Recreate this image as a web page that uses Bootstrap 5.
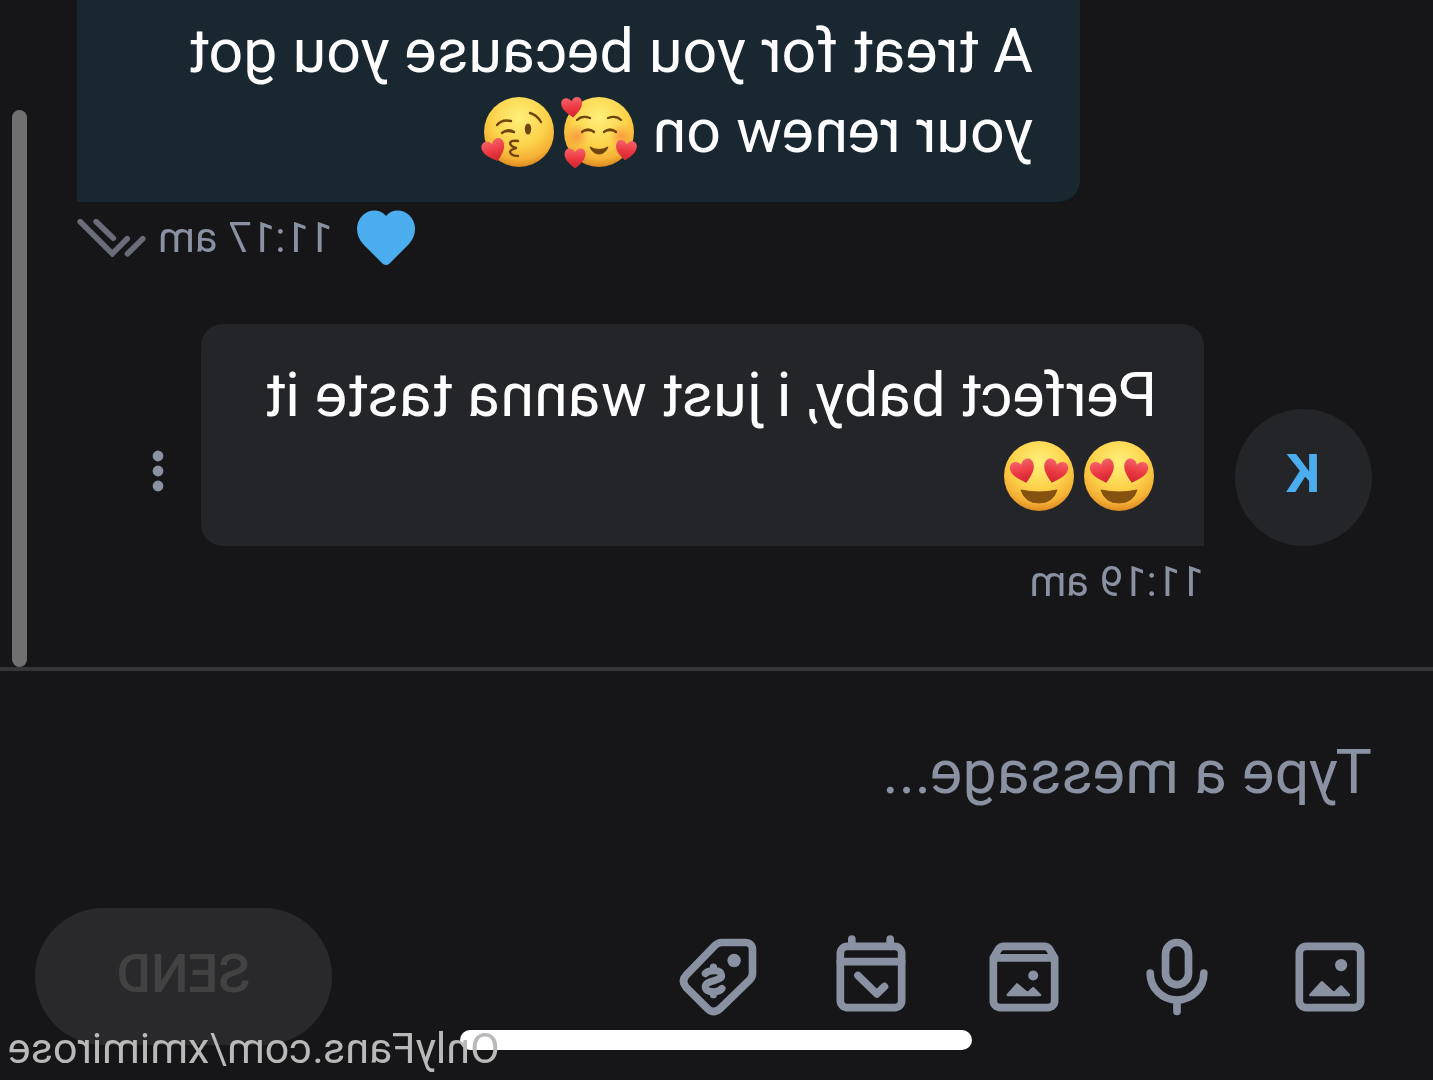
<!DOCTYPE html>
<html lang="en">
<head>
<meta charset="utf-8">
<meta name="viewport" content="width=device-width, initial-scale=1">
<title>Messages</title>
<link href="https://cdn.jsdelivr.net/npm/bootstrap@5.3.0/dist/css/bootstrap.min.css" rel="stylesheet">
<style>
  body { background: #161618; color: #fdfdfe; font-family: Roboto, "Liberation Sans", sans-serif; }
  /* The whole view is shown flipped, like a selfie-camera recording */
  .flipped { transform: scaleX(-1); }
  .muted-ink { color: #8a91a2; }
  .thread { padding-bottom: 55px; }
  .message + .message { margin-top: 56px; }
  .sent { padding-right: 77px; }
  .received { padding-left: 61px; }
  .bubble { width: 70vw; padding: 31px 47px; font-size: 61px; line-height: 80px; border-radius: 22px; }
  .bubble-sent { background: #182730; border-bottom-right-radius: 0; }
  .bubble-received { background: #242529; border-bottom-left-radius: 0; }
  .emoji { width: 80px; height: 80px; vertical-align: top; overflow: visible; }
  .meta { margin-top: 6px; font-size: 42px; line-height: 60px; }
  .meta-received { margin-left: 168px; }
  .avatar { width: 137px; height: 137px; margin-right: 31px; padding-bottom: 6px; background: #242529; color: #4bacee; font-size: 53px; }
  .more-btn { margin: 0 0 48px 37px; width: 12px; }
  .like-btn { margin-right: 24px; }
  .checks { margin-left: 12px; }
  .scroll-thumb { top: 110px; right: 12px; bottom: 0; width: 15px; background: #707070; }
  .composer { border-top: 4px solid #363638; padding-top: 61px; padding-bottom: 35px; }
  .composer-input { padding: 0 61px; font-size: 61px; line-height: 80px; height: 80px; margin-bottom: 96px; background: transparent; color: #fdfdfe; }
  .composer-input:focus { background: transparent; color: #fdfdfe; box-shadow: none; }
  .composer-input::placeholder { color: #8a91a2; opacity: 1; }
  .toolbar { padding-left: 26px; padding-right: 35px; }
  .tool { width: 153px; height: 137px; color: #8a91a2; }
  .tool svg { width: 92px; height: 92px; }
  .send-btn, .send-btn:disabled { width: 297px; height: 137px; padding-bottom: 10px; background: #29292c; color: #424243; border: 0; opacity: 1; font-size: 53px; }
  .home-bar { width: 512px; height: 20px; bottom: 30px; background: #fff; }
  .watermark { right: 8px; bottom: 4px; font-size: 43px; line-height: 56px; color: #b9b9b9; }
</style>
<script src="https://cdn.jsdelivr.net/npm/bootstrap@5.3.0/dist/js/bootstrap.bundle.min.js"></script>
</head>
<body>
<svg width="0" height="0" class="position-absolute" aria-hidden="true">
  <defs>
    <radialGradient id="face" cx=".5" cy=".3" r=".72">
      <stop offset="0" stop-color="#fff07a"/><stop offset=".55" stop-color="#fcd24a"/><stop offset=".82" stop-color="#f5b135"/><stop offset="1" stop-color="#d9821f"/>
    </radialGradient>
    <radialGradient id="blush"><stop offset="0" stop-color="#f9823c" stop-opacity=".65"/><stop offset="1" stop-color="#f9823c" stop-opacity="0"/></radialGradient>
    <linearGradient id="love" x1="0" y1="0" x2="0" y2="1"><stop offset="0" stop-color="#f5626a"/><stop offset=".5" stop-color="#ec3a42"/><stop offset="1" stop-color="#cf2430"/></linearGradient>
    <path id="heart" d="M0 11C-5 7-11 2-11-4C-11-11-3-12 0-6C3-12 11-11 11-4C11 2 5 7 0 11Z" fill="url(#love)"/>
  </defs>
</svg>

<div class="flipped d-flex flex-column vh-100 overflow-hidden position-relative">
  <main class="thread position-relative flex-grow-1 d-flex flex-column justify-content-end overflow-hidden">
    <article class="message sent d-flex flex-column align-items-end">
      <div class="bubble bubble-sent">A treat for you because you got your renew on <svg class="emoji" viewBox="0 0 80 80" role="img" aria-label="smiling face with hearts"><g transform="translate(38 41)">
        <circle r="35" fill="url(#face)"/>
        <circle cx="-22" cy="4" r="12" fill="url(#blush)"/><circle cx="22" cy="4" r="12" fill="url(#blush)"/>
        <g fill="none" stroke="#6f4410" stroke-width="2.4" stroke-linecap="round">
          <path d="M-22-12Q-17-17-9-14M22-12Q17-17 9-14"/>
          <path d="M-17 0Q-11-5-5 0M-16-1Q-11-3-6-1M17 0Q11-5 5 0M16-1Q11-3 6-1"/>
        </g>
        <path d="M-9 15Q0 20 9 15Q6 22 0 22T-9 15Z" fill="#6f4410" stroke="#6f4410" stroke-linejoin="round"/>
        <use href="#heart" transform="translate(27 -25) rotate(6) scale(.95)"/><use href="#heart" transform="translate(24 26) scale(.95)"/><use href="#heart" transform="translate(-27 18) rotate(-6) scale(.95)"/>
      </g></svg><svg class="emoji" viewBox="0 0 80 80" role="img" aria-label="face blowing a kiss"><g transform="translate(38 41)">
        <circle r="35" fill="url(#face)"/>
        <g fill="none" stroke="#6f4410" stroke-width="2.4" stroke-linecap="round" stroke-linejoin="round">
          <path d="M22-7Q17-13 8-11M-11-19Q-18-17-22-10"/>
          <path d="M17 1Q11-4 5 0M16 0Q11-2 6 0"/>
          <path d="M1 9Q8 8 9 11Q9 14 3 16Q9 18 9 20Q8 24 1 24"/>
        </g>
        <ellipse cx="-9" cy="-3" rx="3.2" ry="5.6" fill="#6f4410"/>
        <use href="#heart" transform="translate(25 18) rotate(18) scale(1.05)"/>
      </g></svg></div>
      <div class="meta d-flex align-items-center muted-ink">
        <button type="button" class="like-btn btn p-0 border-0 d-flex" aria-label="Liked">
          <svg width="58" height="56" viewBox="0 0 58 56" fill="#4bacee"><path d="M26 54L6 34C-2 25-2 12 6 5C13-1 23-1 29 6C35-1 45-1 52 5C60 12 60 25 52 34L32 54Q29 56 26 54Z"/></svg>
        </button>
        <time datetime="11:17">11:17 am</time>
        <svg class="checks" width="69" height="38" viewBox="0 0 207 115" fill="none" stroke="#6a6d77" stroke-width="17" stroke-linecap="round" role="img" aria-label="Read"><path d="M198 8L101 105L56 60M150 8L98 58M55 105L9 60"/></svg>
      </div>
    </article>

    <article class="message received">
      <div class="d-flex align-items-end">
        <div class="avatar rounded-circle flex-shrink-0 d-flex align-items-center justify-content-center fw-bold">K</div>
        <div class="bubble bubble-received">Perfect baby, i just wanna taste it <svg class="emoji" viewBox="0 0 80 80" role="img" aria-label="heart eyes"><g id="heart-eyes" transform="translate(38 41)">
          <circle r="35" fill="url(#face)"/>
          <use href="#heart" transform="translate(-16 -5) rotate(-16) scale(1.1)"/><use href="#heart" transform="translate(16 -5) rotate(16) scale(1.1)"/>
          <path d="M-18 14Q0 18 18 14Q14 27 0 27T-18 14Z" fill="#85530f" stroke="#85530f" stroke-linejoin="round"/>
        </g></svg><svg class="emoji" viewBox="0 0 80 80" role="img" aria-label="heart eyes"><use href="#heart-eyes"/></svg></div>
        <button type="button" class="more-btn btn p-0 border-0 d-flex flex-shrink-0" aria-label="More options">
          <svg width="12" height="48" viewBox="0 0 12 48" fill="#8a91a2"><circle cx="6" cy="6" r="5.4"/><circle cx="6" cy="21" r="5.4"/><circle cx="6" cy="36" r="5.4"/></svg>
        </button>
      </div>
      <div class="meta meta-received muted-ink"><time datetime="11:19">11:19 am</time></div>
    </article>
    <div class="scroll-thumb position-absolute rounded-pill"></div>
  </main>

  <form class="composer flex-shrink-0">
    <input type="text" class="composer-input form-control border-0 rounded-0" placeholder="Type a message..." aria-label="Message">
    <div class="toolbar d-flex align-items-center">
      <button type="button" class="tool btn p-0 border-0" aria-label="Add image">
        <svg viewBox="0 0 24 24" fill="none" stroke="currentColor" stroke-width="2"><rect x="4" y="4" width="16" height="16" rx="1.8"/><circle cx="9.1" cy="8.9" r="1.6" fill="currentColor" stroke="none"/><path d="M17.1 16.7H7.1L9.1 14.5L11 16.3L14.1 13.4Z" fill="currentColor" stroke-width=".7" stroke-linejoin="round"/></svg>
      </button>
      <button type="button" class="tool btn p-0 border-0" aria-label="Record voice">
        <svg viewBox="0 0 24 24" fill="none" stroke="currentColor" stroke-width="2" stroke-linecap="round"><rect x="9" y="3" width="6" height="11" rx="3"/><path d="M5 11a7 7 0 0 0 14 0M12 18v3"/></svg>
      </button>
      <button type="button" class="tool btn p-0 border-0" aria-label="Media vault">
        <svg viewBox="0 0 24 24" fill="none" stroke="currentColor" stroke-width="2" stroke-linejoin="round"><path d="M4 7V18.2A1.8 1.8 0 0 0 5.8 20H18.2A1.8 1.8 0 0 0 20 18.2V7L18.7 4.8Q18.2 4 17.3 4H6.7Q5.8 4 5.3 4.8ZH20"/><circle cx="9.6" cy="11.6" r="1.3" fill="currentColor" stroke="none"/><path d="M16.3 16.7H7.8L9.6 14.9L11.1 16.2L13.8 13.9Z" fill="currentColor" stroke-width=".6"/></svg>
      </button>
      <button type="button" class="tool btn p-0 border-0" aria-label="Schedule">
        <svg viewBox="0 0 24 24" fill="none" stroke="currentColor" stroke-width="2" stroke-linecap="round" stroke-linejoin="round"><rect x="4" y="4" width="16" height="16" rx="1.8"/><path d="M4 8H20M7 2.1V4M17 2.1V4M15.4 11.6L10.5 16.4L8.5 14.5"/></svg>
      </button>
      <button type="button" class="tool btn p-0 border-0" aria-label="Set price">
        <svg viewBox="0 0 24 24" fill="none" stroke="currentColor" stroke-width="2" stroke-linecap="round"><path d="M11 3H4.8A1.8 1.8 0 0 0 3 4.8V11Q3 12 3.7 12.7L11.5 20.3Q13.2 21.7 14.7 20.3L20.3 14.7Q21.7 13 20.3 11.5L12.7 3.7Q12 3 11 3Z"/><circle cx="7.8" cy="7.7" r="1.75" fill="currentColor" stroke="none"/><path d="M15.3 11.1C14.4 10.1 11.3 9.9 11.1 11.5C10.9 13.3 15.4 12.6 15.3 14.6C15.2 16.3 11.8 16.1 11 15M13.2 9.4V10M13.2 16V16.6" stroke-width="1.9"/></svg>
      </button>
      <button type="submit" class="send-btn btn rounded-pill ms-auto fw-medium" disabled>SEND</button>
    </div>
  </form>

  <div class="home-bar position-absolute start-50 translate-middle-x rounded-pill"></div>
  <div class="watermark position-absolute">OnlyFans.com/xmimirose</div>
</div>
</body>
</html>
